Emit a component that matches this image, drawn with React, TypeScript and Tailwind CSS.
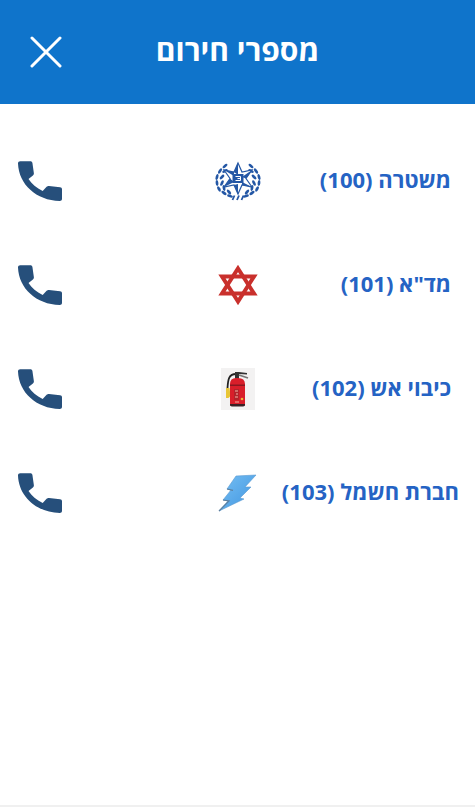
import type { ReactNode } from "react";

function PoliceIcon() {
  const leaves = [
    [16, 36, 75], [10, 33, 55], [5, 29, 30], [3, 23, 5], [3, 17, -15], [6, 11, -35], [11, 6, -50],
    [15, 32, 40], [10, 28, 10], [8, 23, -25], [8, 17, -45], [11, 11, -65],
  ];
  const branch = leaves.map(([x, y, angle]) => (
    <ellipse key={`${x}-${y}`} cx={x} cy={y} rx="1.4" ry="3" transform={`rotate(${-angle} ${x} ${y})`} />
  ));
  return (
    <svg viewBox="0 0 48 42" className="h-[42px] w-12" fill="#2457a5" aria-hidden="true">
      <g>{branch}</g>
      <g transform="translate(48 0) scale(-1 1)">{branch}</g>
      <path d="M24 3 28 12 38 10 32 18.500 38 27 28 25 24 34 20 25 10 27 16 18.500 10 10 20 12Z" fill="#fff" stroke="#2457a5" strokeWidth="1.200" />
      <path d="M24 3V15L20 12ZM38 10 28 17 32 18.500ZM38 27 28 22 28 25ZM24 34V24L20 25ZM10 27 20 22 16 18.500ZM10 10 20 16 20 12Z" />
      <path d="M18.500 14h11v9h-11z" />
      <path d="M21.500 16.500h5v4h-5M23.500 18.500h3" fill="none" stroke="#fff" strokeWidth="1" />
      <path d="m20.500 35.500-2 4.500M25 35.500l-2 4.500M29.500 35.500l-2 4.500" stroke="#2457a5" strokeWidth="1.800" />
    </svg>
  );
}

function StarIcon() {
  return (
    <svg viewBox="0 0 40 42" className="h-[42px] w-10" fill="none" stroke="#c9302c" strokeWidth="4" aria-hidden="true">
      <path d="M20 4.500 36 29.500H4Z" />
      <path d="M20 37.500 4 12.500H36Z" />
    </svg>
  );
}

function ExtinguisherIcon() {
  return (
    <svg viewBox="0 0 34 42" className="h-[42px] w-[34px]" aria-hidden="true">
      <path d="M0 0h34v42H0z" fill="#f3f2f2" />
      <path d="M15 6C8 6 7 11 6.500 20" fill="none" stroke="#222" strokeWidth="1.800" />
      <path d="M5 20h3.500l1 8-2 2H5z" fill="#e8c637" />
      <path d="M14 4h4l8 1v1.500l-8-.5v5h-4z" fill="#333" />
      <path d="m18 7 9 3" stroke="#777" strokeWidth="1.800" />
      <path d="M9 16q0-6 6-6h2q7 0 7 6v20q0 2-2 2H11q-2 0-2-2z" fill="#d91e2a" />
      <path d="M9 16.500h15v1.500H9z" fill="#8b1720" />
      <path d="M13 21h5v11h-5z" fill="#b3232b" />
      <path d="M14 23h3M15 26h2M14 29h3M14 34h4" stroke="#efb3a3" strokeWidth="1.200" />
      <path d="M9 36h15v1.500q-1 1-2 1H11q-1 0-2-1z" fill="#392226" />
      <circle cx="21" cy="31" r="1.300" fill="#efb53a" />
    </svg>
  );
}

function LightningIcon() {
  return (
    <svg viewBox="0 0 40 40" className="size-10" aria-hidden="true">
      <defs>
        <linearGradient id="bolt" x1="0" y1="0" x2="1" y2="1">
          <stop offset="0" stopColor="#77c0f4" />
          <stop offset="1" stopColor="#3f94df" />
        </linearGradient>
      </defs>
      <path d="M18 3 38 2 27 14 33 14 22 25 26 26 1 38 10 28 5 27 13 17 9 16Z" fill="url(#bolt)" stroke="#5a9bd2" strokeWidth=".6" />
      <path d="m9 16 6 1.300M5 27l6 1L1 38" fill="none" stroke="#5d7f9e" strokeWidth="1.200" />
    </svg>
  );
}

function PhoneIcon() {
  return (
    <svg viewBox="3 3 18 18" preserveAspectRatio="none" className="h-10 w-11" fill="#264f7b" aria-hidden="true">
      <path d="M20.200 14.800l-4.500-.6c-.4 0-.8.1-1 .4l-1.600 1.900c-2.500-1.300-4.500-3.200-5.800-5.400l1.800-1.600c.3-.3.400-.6.400-1L8.900 3.900c-.1-.5-.4-.8-.9-.8H3.900c-.5 0-.9.4-.9 1C3.300 13.500 10.500 20.700 20.100 21c.5 0 .9-.4.9-.9v-4.400c0-.5-.3-.9-.8-.9z" />
    </svg>
  );
}

type Contact = { name: string; number: string; icon: ReactNode; inset: string };

const contacts: Contact[] = [
  { name: "משטרה", number: "100", icon: <PoliceIcon />, inset: "pr-6" },
  { name: 'מד"א', number: "101", icon: <StarIcon />, inset: "pr-6" },
  { name: "כיבוי אש", number: "102", icon: <ExtinguisherIcon />, inset: "pr-6" },
  { name: "חברת חשמל", number: "103", icon: <LightningIcon />, inset: "pr-4" },
];

export default function App() {
  return (
    <div dir="rtl" className="flex min-h-screen flex-col border-b-2 border-[#f0f0f0] bg-white font-['Open_Sans','Liberation_Sans',sans-serif]">
      <header className="grid h-26 grid-cols-[92px_1fr_92px] items-center bg-[#0f74cb] text-white">
        <h1 className="col-start-2 pb-1 text-center text-3xl font-bold whitespace-nowrap">מספרי חירום</h1>
        <button type="button" aria-label="סגירה" className="flex size-12 items-center justify-center justify-self-center">
          <svg viewBox="0 0 32 32" className="size-8" fill="none" stroke="currentColor" strokeWidth="3" strokeLinecap="round" aria-hidden="true">
            <path d="m2 2 28 28M30 2 2 30" />
          </svg>
        </button>
      </header>
      <ul className="pt-[25px]">
        {contacts.map(({ name, number, icon, inset }) => (
          <li key={number} className="grid h-26 grid-cols-[1fr_48px_1fr] items-center">
            <span className={`pb-1 text-[22px] font-bold whitespace-nowrap text-[#2563c4] ${inset}`}>
              {name} ({number})
            </span>
            <span className="flex justify-center">{icon}</span>
            <a href={`tel:${number}`} aria-label={`חיוג אל ${name}`} className="justify-self-end pl-[18px]">
              <PhoneIcon />
            </a>
          </li>
        ))}
      </ul>
    </div>
  );
}
